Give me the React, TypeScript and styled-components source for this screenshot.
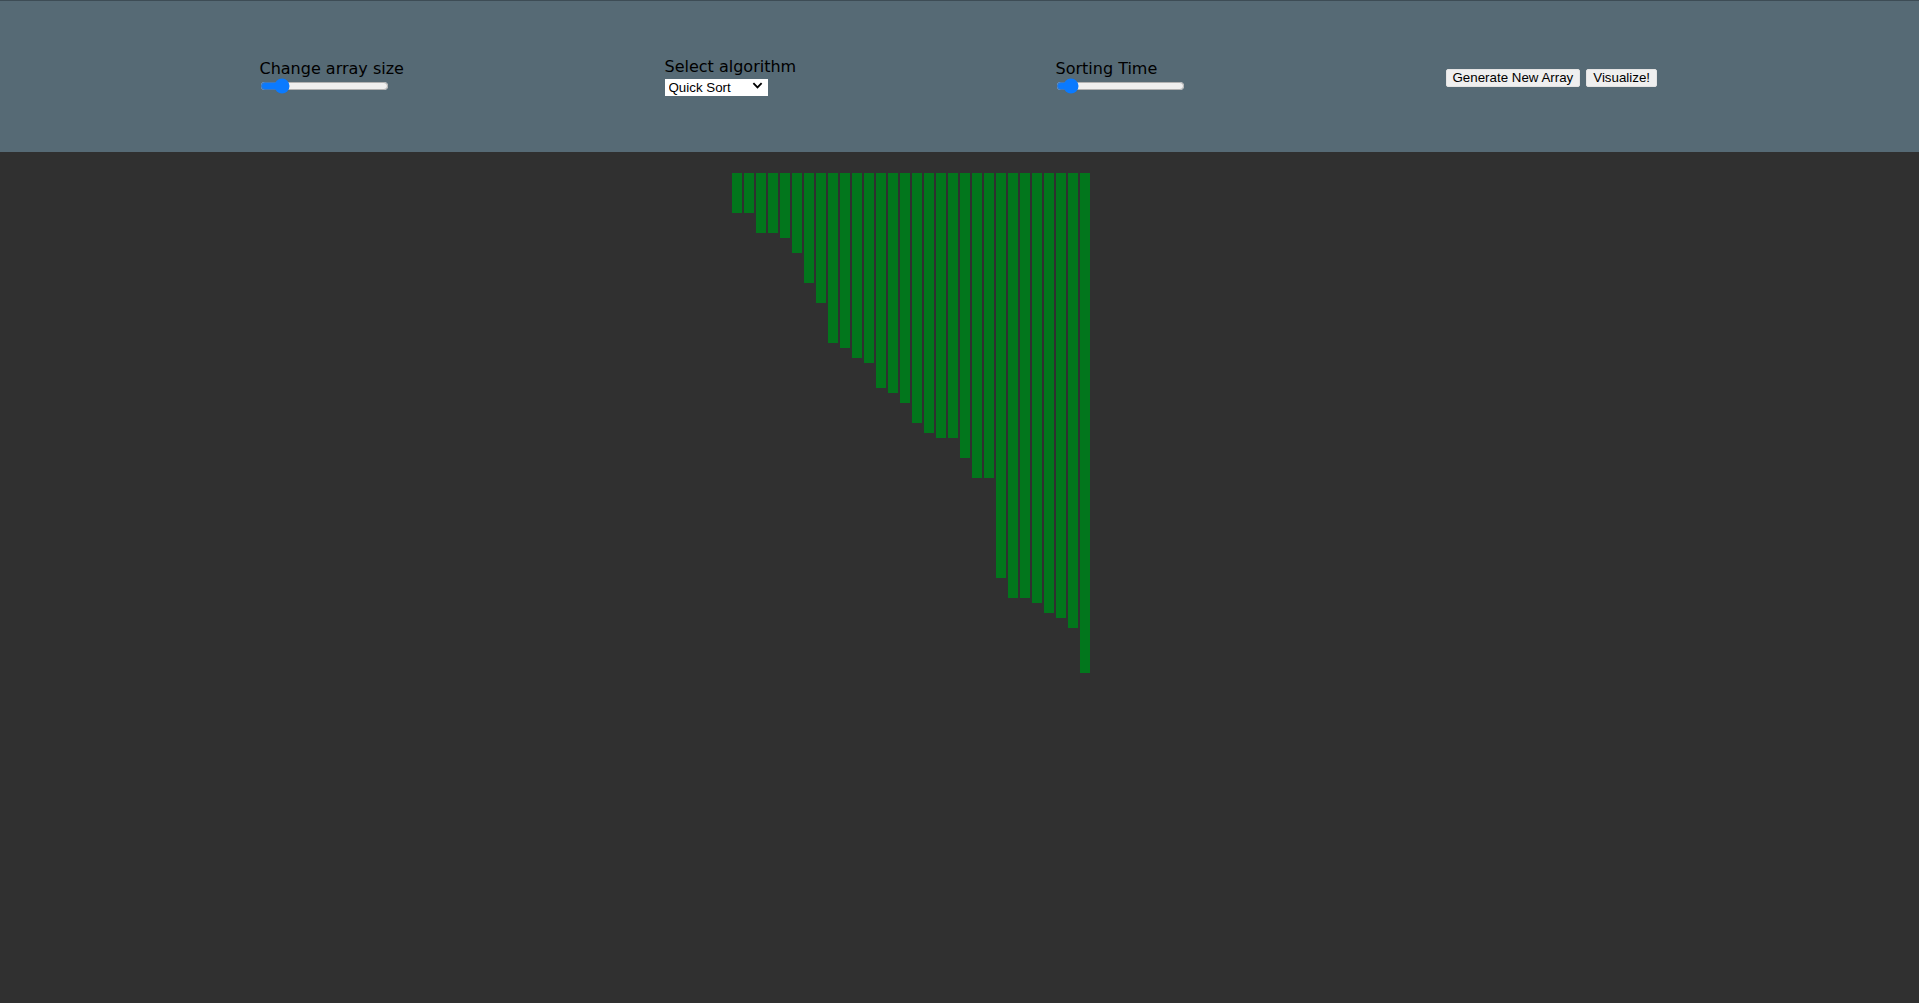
import React, { useState } from "react";
import styled, { createGlobalStyle } from "styled-components";

const GlobalStyle = createGlobalStyle`
    html, body {
        margin: 0;
        padding: 0;
        background: #303030;
    }
    body {
        font-family: "DejaVu Sans", Verdana, sans-serif;
    }
`;

const initialArray = [
    40, 40, 60, 60, 65, 80, 110, 130, 170, 175, 185, 190, 215, 220, 230, 250,
    260, 265, 265, 285, 305, 305, 405, 425, 425, 430, 440, 445, 455, 500,
];

export default function App() {
    const [size, setSize] = useState(30);
    const [speed, setSpeed] = useState(80);
    const [algorithm, setAlgorithm] = useState("quick");

    return (
        <Page>
            <GlobalStyle />
            <Header>
                <Toolbar>
                    <Control>
                        <Label>Change array size</Label>
                        <Range
                            type="range"
                            min={20}
                            max={100}
                            value={size}
                            onChange={(e) => setSize(Number(e.target.value))}
                        />
                    </Control>
                    <Control>
                        <Label>Select algorithm</Label>
                        <SelectWrap>
                            <Select value={algorithm} onChange={(e) => setAlgorithm(e.target.value)}>
                                <option value="quick">Quick Sort</option>
                                <option value="merge">Merge Sort</option>
                                <option value="heap">Heap Sort</option>
                                <option value="bubble">Bubble Sort</option>
                            </Select>
                            <Chevron viewBox="0 0 12 12">
                                <path d="M1.5 3.5 L6 8 L10.5 3.5" />
                            </Chevron>
                        </SelectWrap>
                    </Control>
                    <Control>
                        <Label>Sorting Time</Label>
                        <Range
                            type="range"
                            min={10}
                            max={1000}
                            value={speed}
                            onChange={(e) => setSpeed(Number(e.target.value))}
                        />
                    </Control>
                    <Buttons>
                        <Btn>Generate New Array</Btn>
                        <Btn>Visualize!</Btn>
                    </Buttons>
                </Toolbar>
            </Header>
            <Chart>
                {initialArray.map((value, i) => (
                    <Bar key={i} style={{ height: `${value}px` }} />
                ))}
            </Chart>
        </Page>
    );
}

export const Page = styled.div`
    min-height: 100vh;
    background: #303030;
`;

export const Header = styled.header`
    height: 151px;
    background: #566a75;
    border-top: 1px solid #3d4c55;
    display: flex;
    align-items: center;
`;

export const Toolbar = styled.div`
    width: 1400px;
    margin: 0 auto;
    display: grid;
    grid-template-columns: 405px 391px 390px auto;
    align-items: center;
`;

export const Control = styled.div`
    display: flex;
    flex-direction: column;
    align-items: flex-start;
`;

export const Label = styled.span`
    font-family: "DejaVu Sans", Verdana, sans-serif;
    font-size: 16px;
    line-height: 19px;
    color: #000;
`;

export const Range = styled.input`
    width: 129px;
    height: 16px;
    margin: 0;
    accent-color: #0a7aff;
`;

export const SelectWrap = styled.div`
    position: relative;
    margin-top: 1px;
`;

export const Select = styled.select`
    appearance: none;
    width: 103px;
    height: 17px;
    padding: 0 0 0 4px;
    border: none;
    border-radius: 0;
    background: #fff;
    font-family: "Liberation Sans", Arial, sans-serif;
    font-size: 13.33px;
    color: #000;
    outline: none;
`;

export const Chevron = styled.svg`
    position: absolute;
    right: 5px;
    top: 3px;
    width: 11px;
    height: 11px;
    pointer-events: none;
    fill: none;
    stroke: #000;
    stroke-width: 2;
`;

export const Buttons = styled.div`
    display: flex;
    gap: 6px;
    align-items: center;
    padding-top: 2px;
`;

export const Btn = styled.button`
    height: 18px;
    padding: 0 6px;
    background: #efefef;
    border: 1px solid #e3e3e3;
    border-radius: 2px;
    font-family: "Liberation Sans", Arial, sans-serif;
    font-size: 13.33px;
    line-height: 15px;
    color: #000;
    cursor: pointer;
`;

export const Chart = styled.div`
    width: 458px;
    margin: 0 auto;
    padding-top: 21px;
    display: flex;
    align-items: flex-start;
`;

export const Bar = styled.div`
    width: 10px;
    margin: 0 1px;
    background: #02761c;
    flex-shrink: 0;
`;
